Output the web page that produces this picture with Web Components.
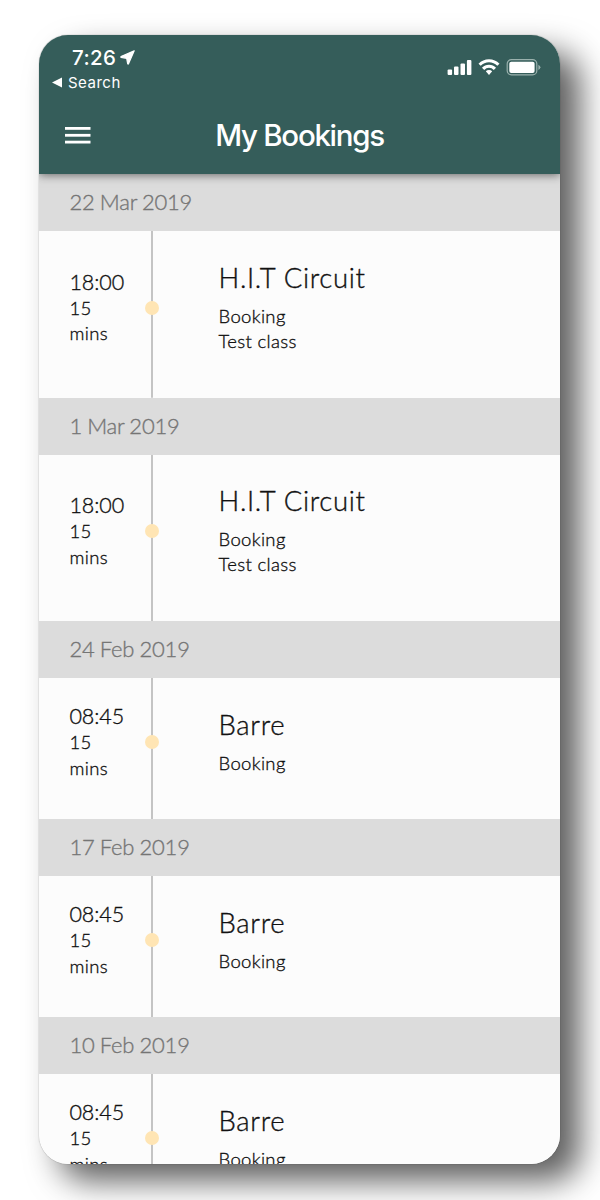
<!DOCTYPE html>
<html lang="en">
<head>
<meta charset="utf-8">
<title>My Bookings</title>
<style>
	body {
		margin: 0;
		padding: 35px 39px;
		height: 1200px;
		box-sizing: border-box;
		overflow: hidden;
		background: #fff;
		font-family: Lato, "Open Sans", sans-serif;
	}
</style>
</head>
<body>
<phone-frame>
	<app-header slot="header" time="7:26" back="Search">My Bookings</app-header>
	<booking-day date="22 Mar 2019">
		<booking-row time="18:00" name="H.I.T Circuit">Booking<br>Test class</booking-row>
	</booking-day>
	<booking-day date="1 Mar 2019">
		<booking-row time="18:00" name="H.I.T Circuit">Booking<br>Test class</booking-row>
	</booking-day>
	<booking-day date="24 Feb 2019">
		<booking-row time="08:45" name="Barre">Booking</booking-row>
	</booking-day>
	<booking-day date="17 Feb 2019">
		<booking-row time="08:45" name="Barre">Booking</booking-row>
	</booking-day>
	<booking-day date="10 Feb 2019">
		<booking-row time="08:45" name="Barre">Booking</booking-row>
	</booking-day>
</phone-frame>

<script>
const define = (name, html, setup) => {
	const template = document.createElement('template');
	template.innerHTML = html;

	customElements.define(name, class extends HTMLElement {
		constructor() {
			super();
			this.attachShadow({ mode: 'open' }).appendChild(template.content.cloneNode(true));
		}

		connectedCallback() {
			if (setup) {
				setup(this, this.shadowRoot);
			}
		}
	});
};

define('phone-frame', `
	<style>
		:host {
			display: block;
			width: 521px;
			height: 1129px;
			border-radius: 29px;
			box-shadow: 20px 17px 32px rgba(0, 0, 0, 0.63), 0 0 1px #666;
		}

		.screen {
			height: 100%;
			display: flex;
			flex-direction: column;
			overflow: hidden;
			border-radius: inherit;
			background: #fcfcfc;
		}

		main {
			flex: 1;
			min-height: 0;
		}
	</style>

	<div class="screen">
		<slot name="header"></slot>
		<main><slot></slot></main>
	</div>
`);

define('status-icons', `
	<style>
		:host {
			display: flex;
		}
	</style>

	<svg width="94" height="20" viewBox="0 0 94 20" fill="#fff">
		<rect x="0.6" y="12.5" width="4.5" height="5.5" rx="1"/>
		<rect x="7" y="9.5" width="4.5" height="8.5" rx="1"/>
		<rect x="13.5" y="6.5" width="4.5" height="11.5" rx="1"/>
		<rect x="19.9" y="3" width="4.5" height="15" rx="1"/>
		<g fill="none" stroke="#fff" stroke-width="3.1">
			<path d="M32.6,7.8 a13,13 0 0 1 18.8,0"/>
			<path d="M36.1,11.9 a8,8 0 0 1 11.8,0"/>
		</g>
		<path d="M38.8,14.3 a4.6,4.6 0 0 1 6.4,0 L42,17.9 z"/>
		<rect x="60.2" y="2.6" width="29.6" height="15.3" rx="4.2" fill="none" stroke="#9ab1ad" stroke-width="1.2"/>
		<rect x="62.3" y="4.7" width="25.3" height="11.2" rx="2"/>
		<path d="M91.4,7.7 q2,1 2,2.6 q0,1.6 -2,2.6 z" fill="#9ab1ad"/>
	</svg>
`);

define('app-header', `
	<style>
		:host {
			flex: none;
			height: 139px;
			display: flex;
			flex-direction: column;
			position: relative;
			z-index: 1;
			color: #fff;
			background: #355d5a;
			box-shadow: 0 1px 9px rgba(0, 0, 0, 0.55);
			font-family: Inter, sans-serif;
		}

		.status {
			height: 62px;
			display: flex;
			justify-content: space-between;
		}

		.left {
			padding: 9px 0 0 13px;
		}

		.clock {
			display: flex;
			align-items: center;
			gap: 4px;
			padding-left: 20px;
			height: 26px;
			font-size: 20.5px;
			font-weight: 500;
			letter-spacing: 0.4px;
		}

		.back {
			display: flex;
			align-items: center;
			gap: 6px;
			height: 25px;
			font-size: 15px;
			letter-spacing: 0.5px;
		}

		status-icons {
			padding: 22px 19px 0 0;
		}

		.bar {
			flex: 1;
			display: grid;
			grid-template-columns: 80px 1fr 80px;
			align-items: center;
			padding-bottom: 1px;
		}

		.menu {
			padding-left: 26px;
			display: block;
		}

		h1 {
			margin: 0;
			text-align: center;
			font-size: 29.5px;
			font-weight: 500;
			letter-spacing: -1.3px;
			white-space: nowrap;
		}
	</style>

	<div class="status">
		<div class="left">
			<div class="clock">
				<span class="time"></span>
				<svg width="15" height="15" viewBox="0 0 15 15"><path d="M14.2,0.8 1,6.6 Q0.6,7 1,7.3 L6.7,8.3 7.7,13.8 Q8.1,14.5 8.5,13.8 z" fill="#fff" stroke="#fff" stroke-width="1.2" stroke-linejoin="round"/></svg>
			</div>
			<div class="back">
				<svg width="10" height="11" viewBox="0 0 10 11"><path d="M10,0.5 V10.5 L0,5.5 z" fill="#fff"/></svg>
				<span class="app"></span>
			</div>
		</div>
		<status-icons></status-icons>
	</div>
	<div class="bar">
		<svg class="menu" width="26" height="18" viewBox="0 0 26 18" fill="#fff">
			<rect y="1" width="25.5" height="2.8"/>
			<rect y="7.9" width="25.5" height="2.8"/>
			<rect y="14.7" width="25.5" height="2.8"/>
		</svg>
		<h1><slot></slot></h1>
	</div>
`, (host, root) => {
	root.querySelector('.time').textContent = host.getAttribute('time');
	root.querySelector('.app').textContent = host.getAttribute('back');
});

define('booking-day', `
	<style>
		:host {
			display: block;
		}

		.date {
			height: 57px;
			line-height: 56px;
			padding-left: 30.5px;
			box-sizing: border-box;
			color: #757575;
			background: #dcdcdc;
			font-size: 22px;
			font-weight: 300;
			letter-spacing: -0.2px;
			word-spacing: -0.6px;
			-webkit-text-stroke: 0.35px;
		}
	</style>

	<div class="date"></div>
	<slot></slot>
`, (host, root) => {
	root.querySelector('.date').textContent = host.getAttribute('date');
});

define('booking-row', `
	<style>
		:host {
			display: grid;
			grid-template-columns: 105px 16px 1fr;
			color: #111;
			font-size: 18.5px;
			font-weight: 300;
			line-height: 25.4px;
			letter-spacing: 0.35px;
			-webkit-text-stroke: 0.35px;
		}

		.when {
			align-self: center;
			padding: 0 0 13px 30.5px;
		}

		.time {
			font-size: 21.5px;
			line-height: 27px;
			letter-spacing: -0.1px;
		}

		.duration {
			width: 40px;
		}

		.track {
			display: flex;
			align-items: center;
			justify-content: center;
			padding-bottom: 13px;
			background: linear-gradient(#c4c4c4, #c4c4c4) center / 2px 100% no-repeat;
		}

		.dot {
			width: 14px;
			height: 14px;
			border-radius: 50%;
			background: #ffe5b4;
		}

		.what {
			padding: 27.5px 0 43.2px 58.5px;
		}

		h2 {
			margin: 0 0 7px;
			color: #111;
			font-size: 27.5px;
			font-weight: 300;
			line-height: 38px;
			letter-spacing: 0.65px;
		}
	</style>

	<div class="when">
		<div class="time"></div>
		<div class="duration">15 mins</div>
	</div>
	<div class="track"><div class="dot"></div></div>
	<div class="what">
		<h2></h2>
		<slot></slot>
	</div>
`, (host, root) => {
	root.querySelector('.time').textContent = host.getAttribute('time');
	root.querySelector('h2').textContent = host.getAttribute('name');
});
</script>
</body>
</html>
